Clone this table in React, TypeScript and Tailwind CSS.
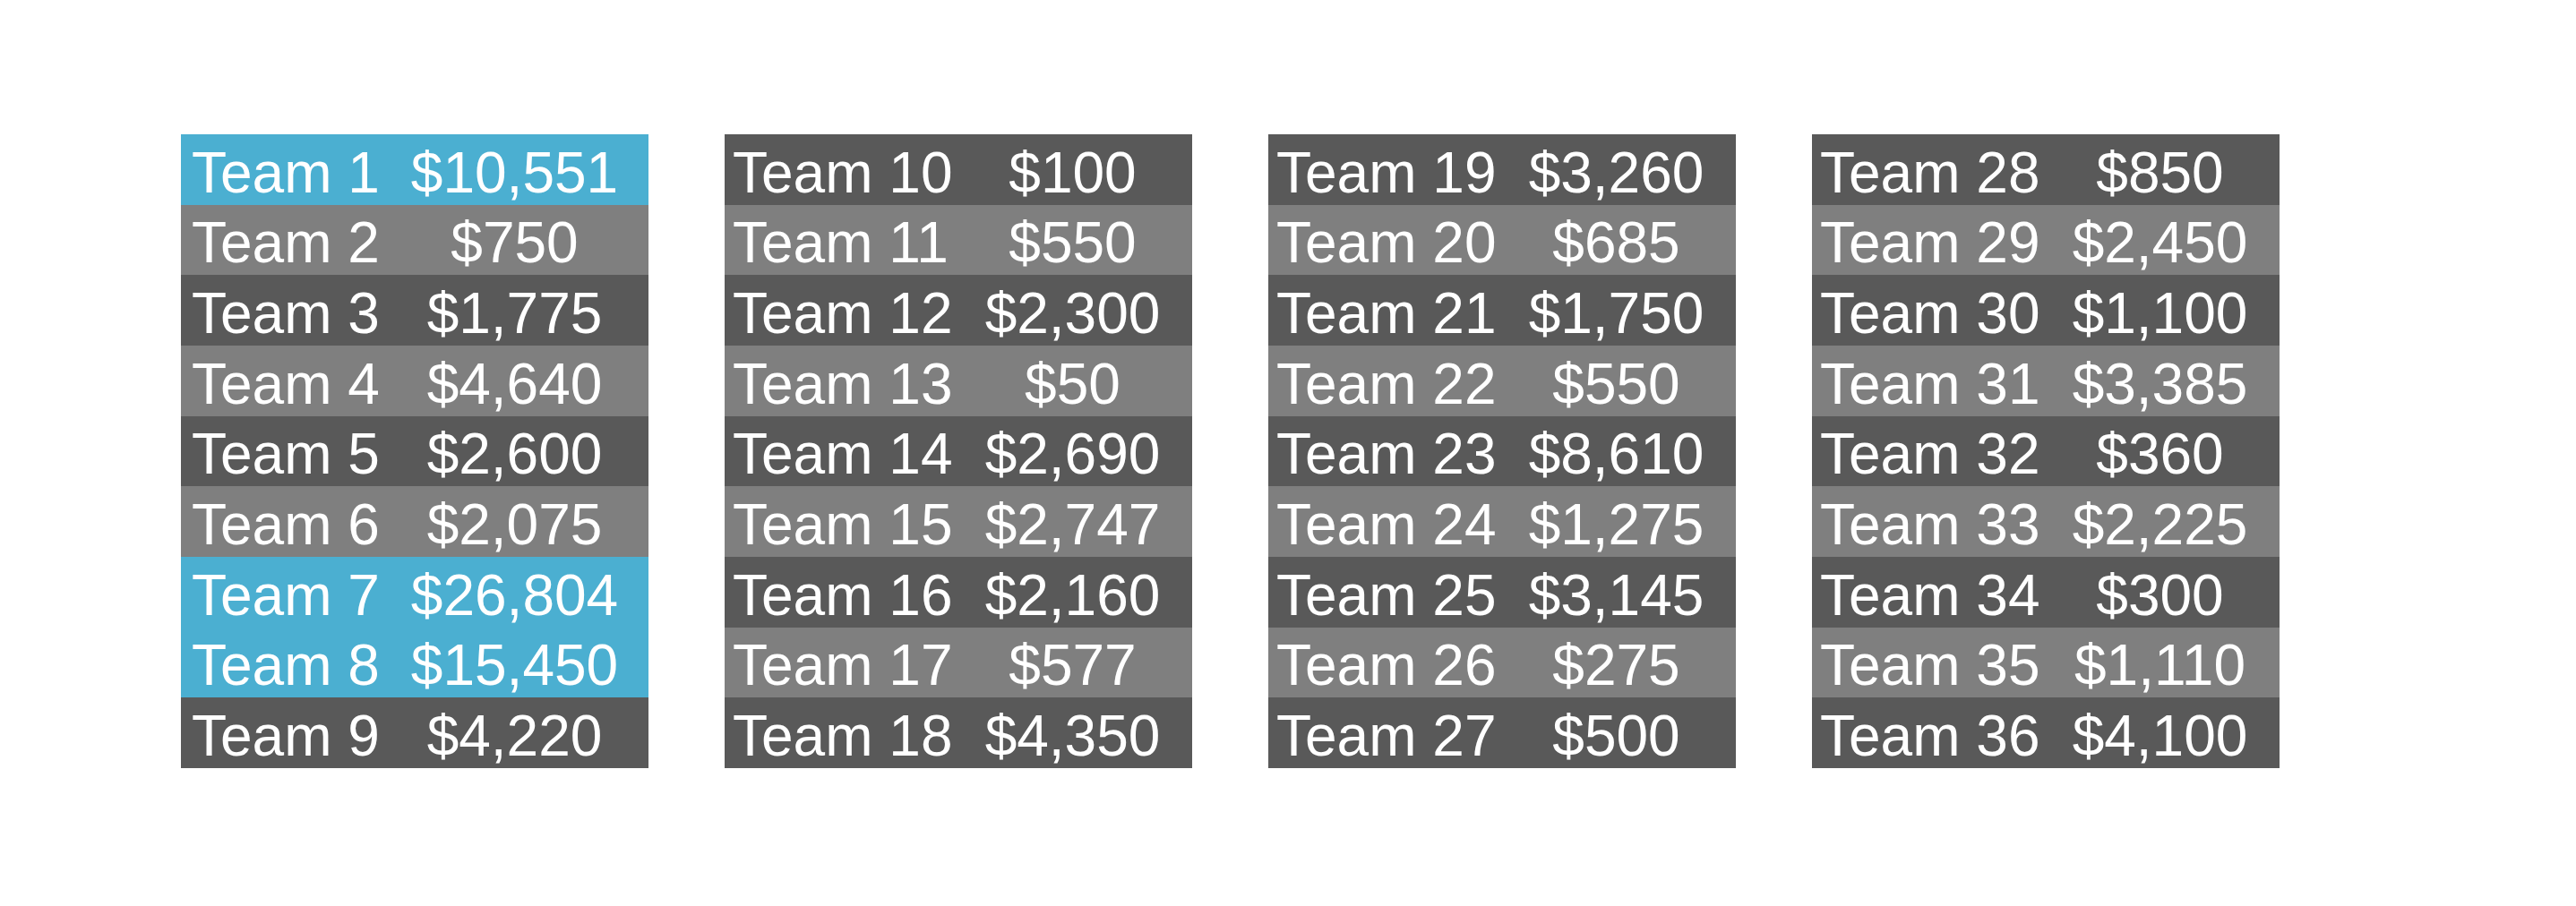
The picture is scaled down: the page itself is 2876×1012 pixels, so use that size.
const tables: { team: number; amount: string; hi?: boolean }[][] = [
  [
    { team: 1, amount: "$10,551", hi: true },
    { team: 2, amount: "$750" },
    { team: 3, amount: "$1,775" },
    { team: 4, amount: "$4,640" },
    { team: 5, amount: "$2,600" },
    { team: 6, amount: "$2,075" },
    { team: 7, amount: "$26,804", hi: true },
    { team: 8, amount: "$15,450", hi: true },
    { team: 9, amount: "$4,220" },
  ],
  [
    { team: 10, amount: "$100" },
    { team: 11, amount: "$550" },
    { team: 12, amount: "$2,300" },
    { team: 13, amount: "$50" },
    { team: 14, amount: "$2,690" },
    { team: 15, amount: "$2,747" },
    { team: 16, amount: "$2,160" },
    { team: 17, amount: "$577" },
    { team: 18, amount: "$4,350" },
  ],
  [
    { team: 19, amount: "$3,260" },
    { team: 20, amount: "$685" },
    { team: 21, amount: "$1,750" },
    { team: 22, amount: "$550" },
    { team: 23, amount: "$8,610" },
    { team: 24, amount: "$1,275" },
    { team: 25, amount: "$3,145" },
    { team: 26, amount: "$275" },
    { team: 27, amount: "$500" },
  ],
  [
    { team: 28, amount: "$850" },
    { team: 29, amount: "$2,450" },
    { team: 30, amount: "$1,100" },
    { team: 31, amount: "$3,385" },
    { team: 32, amount: "$360" },
    { team: 33, amount: "$2,225" },
    { team: 34, amount: "$300" },
    { team: 35, amount: "$1,110" },
    { team: 36, amount: "$4,100" },
  ],
];

const TeamTable = ({
  rows,
  first,
}: {
  rows: { team: number; amount: string; hi?: boolean }[];
  first: boolean;
}) => {
  return (
    <div className="flex w-[522px] flex-col">
      {rows.map((row, i) => (
        <div
          key={row.team}
          className={`grid h-[78.67px] items-center pt-[7px] text-[64px] leading-none text-white ${
            first ? "grid-cols-[223px_1fr]" : "grid-cols-[255px_1fr]"
          } ${row.hi ? "bg-[#4bafd1]" : i % 2 === 0 ? "bg-[#595959]" : "bg-[#7f7f7f]"}`}
        >
          <span className={`whitespace-nowrap ${first ? "pl-[12px]" : "pl-[9px]"}`}>
            Team {row.team}
          </span>
          <span className="whitespace-nowrap text-center">{row.amount}</span>
        </div>
      ))}
    </div>
  );
};

export default function App() {
  return (
    <div className="h-[1012px] w-[2876px] bg-white font-['Liberation_Sans',Arial,sans-serif]">
      <div className="flex gap-[85px] pl-[202px] pt-[150px]">
        {tables.map((rows, i) => (
          <TeamTable key={i} rows={rows} first={i === 0} />
        ))}
      </div>
    </div>
  );
}
